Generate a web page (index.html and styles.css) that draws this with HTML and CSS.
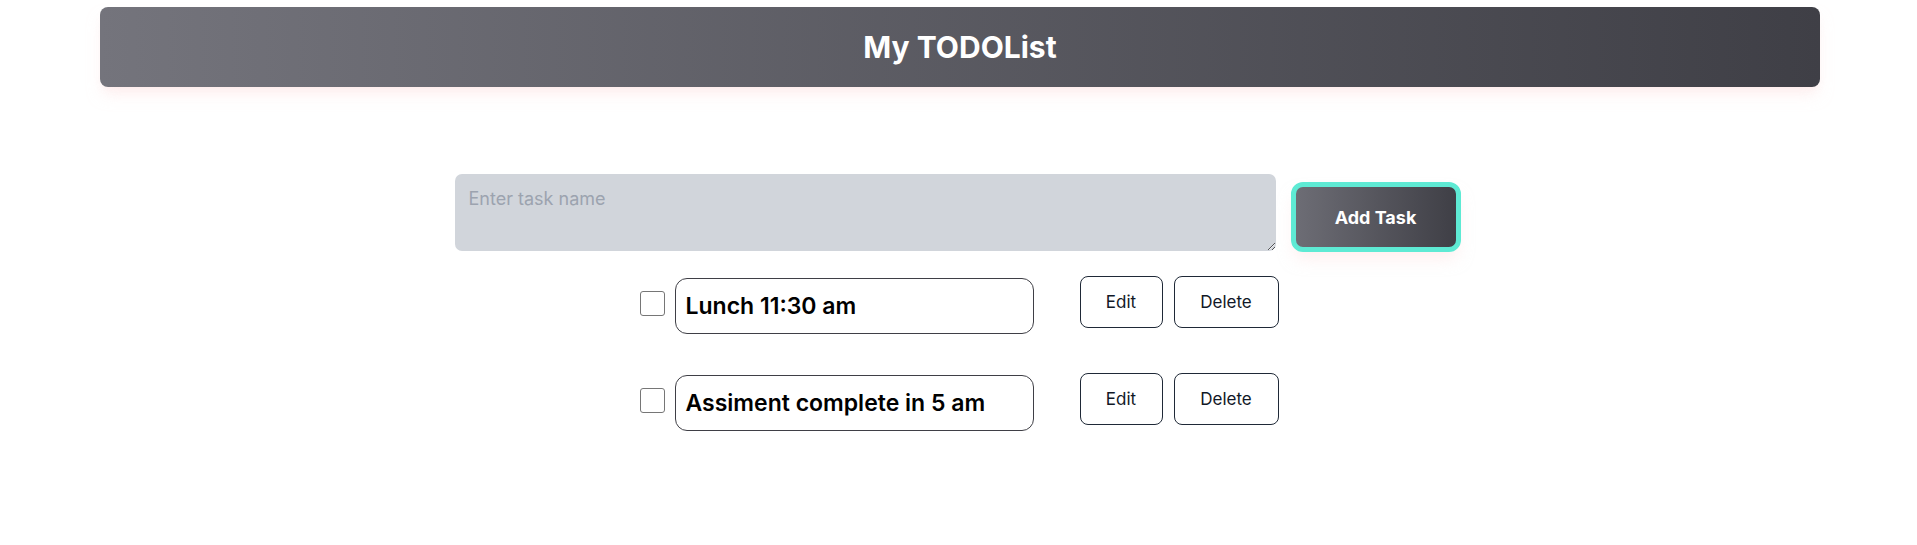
FILE: index.html
```html
<!DOCTYPE html>
<html>
<head>
<meta charset="utf-8">
<link rel="stylesheet" href="styles.css">
</head>
<body>
<header class="header"><h1 class="title">My TODOList</h1></header>
<main class="main">
  <div class="add-row">
    <textarea class="task-input" placeholder="Enter task name"></textarea>
    <button class="add-btn">Add Task</button>
  </div>
  <ul class="list">
    <li class="item">
      <input type="checkbox" class="check">
      <div class="task-text">Lunch 11:30 am</div>
      <div class="actions">
        <button class="btn btn-edit">Edit</button>
        <button class="btn btn-delete">Delete</button>
      </div>
    </li>
    <li class="item">
      <input type="checkbox" class="check">
      <div class="task-text">Assiment complete in 5 am</div>
      <div class="actions">
        <button class="btn btn-edit">Edit</button>
        <button class="btn btn-delete">Delete</button>
      </div>
    </li>
  </ul>
</main>
</body>
</html>
```
FILE: styles.css
```css
* { box-sizing: border-box; }
html, body { margin: 0; padding: 0; background: #fff; }
body {
  font-family: Inter, "Noto Sans", sans-serif;
  padding: 7px 97px 0 100px;
}
.header {
  height: 80px;
  border-radius: 8px;
  background: linear-gradient(to right, #74747c, #3f3f46);
  display: flex;
  align-items: center;
  justify-content: center;
  box-shadow: 0 10px 15px -3px rgba(254, 226, 226, 0.55), 0 4px 6px -4px rgba(254, 226, 226, 0.55);
}
.title {
  margin: 0;
  color: #fff;
  font-size: 30px;
  font-weight: 700;
  line-height: 36px;
}
.main {
  display: flex;
  flex-direction: column;
  align-items: center;
  padding-top: 87px;
  padding-right: 5px;
}
.add-row {
  display: flex;
  align-items: flex-start;
  gap: 15px;
}
.task-input {
  width: 821px;
  height: 77px;
  border: none;
  border-radius: 7px;
  background: #d1d5db;
  padding: 13px 14px;
  font-family: Inter, sans-serif;
  font-size: 18px;
  line-height: 24px;
  color: #111;
  outline: none;
  resize: vertical;
}
.task-input::placeholder { color: #9ca3af; }
.add-btn {
  margin-top: 8px;
  width: 170px;
  height: 70px;
  border: 5px solid #5eead4;
  border-radius: 12px;
  background: linear-gradient(to right, #6d6d75, #3f3f46);
  color: #fff;
  font-family: Inter, sans-serif;
  font-size: 18px;
  font-weight: 700;
  box-shadow: 0 10px 15px -3px rgba(254, 226, 226, 0.5);
}
.list {
  list-style: none;
  margin: 24px 0 0 3px;
  padding: 0;
  display: flex;
  flex-direction: column;
  gap: 39px;
}
.item {
  display: flex;
  align-items: flex-start;
  height: 58px;
}
.check {
  appearance: none;
  -webkit-appearance: none;
  width: 25px;
  height: 25px;
  margin: 15px 10px 0 0;
  border: 1px solid #767676;
  border-radius: 3px;
  background: #fff;
}
.task-text {
  margin-top: 2px;
  width: 359px;
  height: 56px;
  border: 1px solid #3f3f46;
  border-radius: 12px;
  padding: 0 10px;
  display: flex;
  align-items: center;
  font-size: 23px;
  font-weight: 600;
  color: #000;
}
.actions {
  display: flex;
  gap: 11px;
  margin-left: 46px;
}
.btn {
  height: 52px;
  border: 1px solid #1f2937;
  border-radius: 8px;
  background: #fff;
  font-family: Inter, sans-serif;
  font-size: 17px;
  color: #111827;
}
.btn-edit { width: 83px; }
.btn-delete { width: 105px; }
```
